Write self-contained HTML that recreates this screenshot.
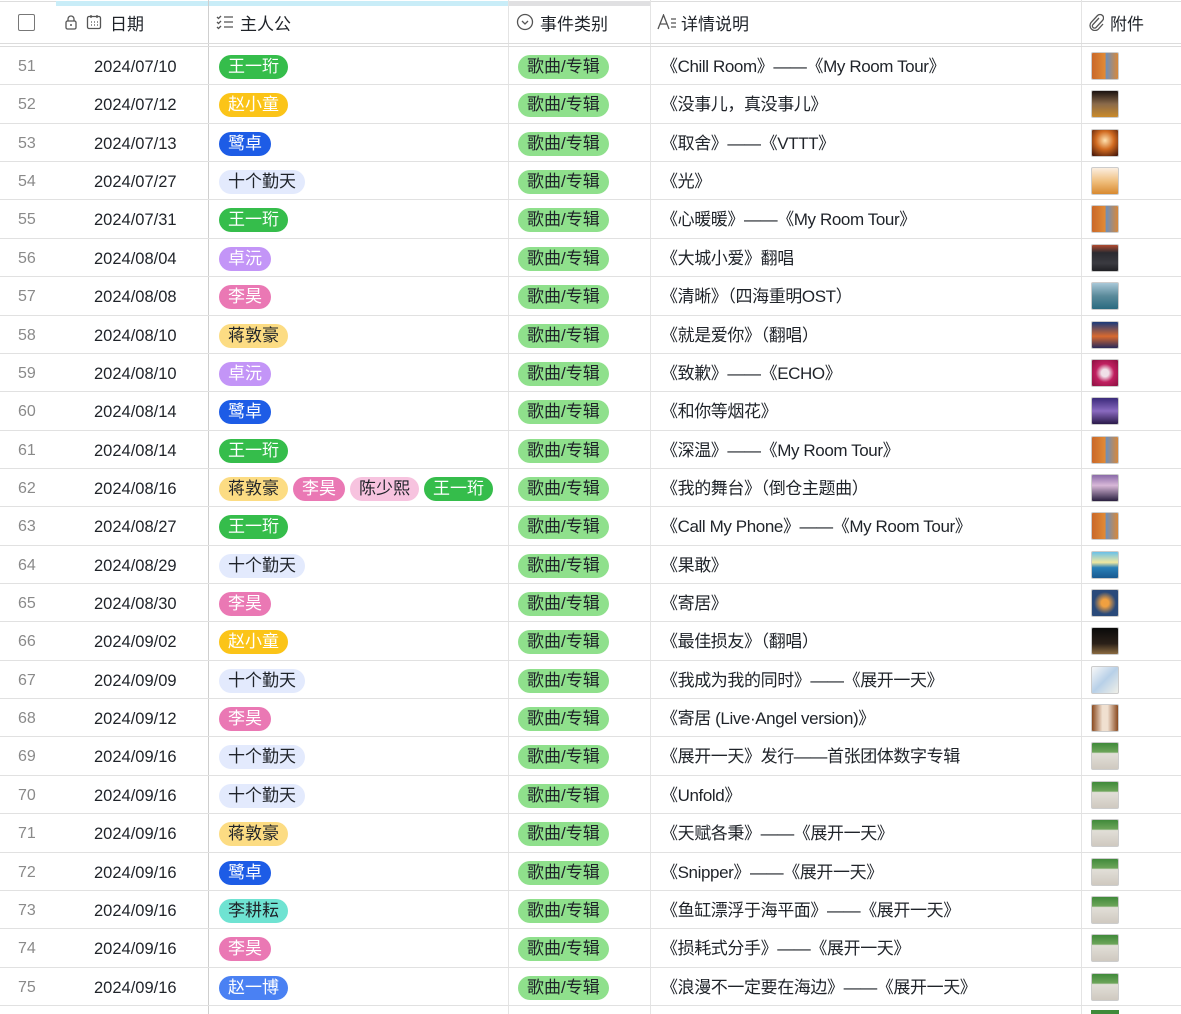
<!DOCTYPE html>
<html><head><meta charset="utf-8"><style>
*{box-sizing:border-box;margin:0;padding:0}
html,body{width:1181px;height:1014px;overflow:hidden}
body{background:#fff;font-family:"Liberation Sans","Noto Sans CJK SC",sans-serif;color:#1f2329;position:relative}
.topl{position:absolute;left:0;top:1px;width:1181px;height:1px;background:#ddd}
.bb{position:absolute;left:56px;top:1px;width:452px;height:5px;background:#c9edf8}
.gb{position:absolute;left:508px;top:1px;width:142px;height:5px;background:#e0e0e2}
.hd{position:absolute;top:0;height:44px;display:flex;align-items:center;font-size:17px;color:#1f2329}
.hl1{position:absolute;left:0;top:43px;width:1181px;height:1px;background:#dcdcdc}
.hl2{position:absolute;left:0;top:46px;width:1181px;height:1px;background:#dcdcdc}
.v{position:absolute;top:0;bottom:0;width:1px;background:#e4e4e4}
.row{position:absolute;left:0;width:1181px;height:38.36px;border-bottom:1px solid #e1e1e1}
.n{position:absolute;left:18px;top:1px;line-height:38px;font-size:16px;color:#8a8a8a}
.d{position:absolute;left:94px;top:1px;line-height:38px;font-size:16.5px;color:#1f2329}
.tags{position:absolute;left:219px;top:8px;display:flex;gap:5px}
.t{height:24px;line-height:24px;border-radius:12px;padding:0 9px;font-size:17px;white-space:nowrap}
.g{background:#35bd4b;color:#fff}.y{background:#fbc418;color:#fff}.b{background:#1d5ce6;color:#fff}
.l{background:#e3eafd;color:#1f2329}.p{background:#c395f7;color:#fff}.k{background:#ea78b4;color:#fff}
.ly{background:#fcdc83;color:#1f2329}.lp{background:#f7c3df;color:#1f2329}.tl{background:#6fe3d2;color:#1f2329}.mb{background:#4a81f3;color:#fff}
.c{position:absolute;left:518px;top:8px;height:24px;line-height:24px;border-radius:12px;padding:0 9px;font-size:17px;background:#8fe08c;color:#1f2329}
.x{position:absolute;left:661px;top:1px;line-height:38px;font-size:17px;letter-spacing:-0.4px;color:#1f2329;white-space:nowrap}
.im{position:absolute;left:1091px;top:5px;width:28px;height:28px;border-radius:2px;border:1px solid #ccc}
.rm{background:linear-gradient(90deg,#c9682a 0,#e08a36 50%,#6f8fb8 55%,#d8883a 100%)}
.gr{background:linear-gradient(#3f8a3a 0,#6da55a 35%,#e2dfd8 40%,#cfc9c0 100%)}
</style></head><body>
<div class="topl"></div><div class="bb"></div><div class="gb"></div>
<div class="v" style="left:208px;background:#cfcfcf"></div>
<div class="v" style="left:508px"></div>
<div class="v" style="left:650px"></div>
<div class="v" style="left:1081px"></div>
<div class="hd" style="left:18px"><span style="display:inline-block;width:17px;height:17px;border:1.5px solid #777;border-radius:2px"></span></div>
<div class="hd" style="left:64px;gap:8px">
<svg width="14" height="16" viewBox="0 0 14 16"><rect x="2" y="7" width="10" height="8" rx="1.5" fill="none" stroke="#555" stroke-width="1.3"/><path d="M4 7V5a3 3 0 0 1 6 0v2" fill="none" stroke="#555" stroke-width="1.3"/><circle cx="7" cy="11" r="1" fill="#555"/></svg>
<svg width="16" height="16" viewBox="0 0 16 16"><rect x="1.5" y="2.5" width="13" height="12" rx="1.5" fill="none" stroke="#555" stroke-width="1.3"/><path d="M5 1v3M11 1v3" stroke="#555" stroke-width="1.3"/><path d="M5 8h1M8 8h1M11 8h1M5 11h1M8 11h1M11 11h1" stroke="#555" stroke-width="1.3"/></svg>
<span>日期</span></div>
<div class="hd" style="left:216px;gap:6px"><svg width="18" height="16" viewBox="0 0 18 16"><path d="M1 3l1.5 1.5L5 2M1 8l1.5 1.5L5 7M1 13l1.5 1.5L5 12M8 3h9M8 8h9M8 13h9" fill="none" stroke="#555" stroke-width="1.3"/></svg><span>主人公</span></div>
<div class="hd" style="left:516px;gap:6px"><svg width="18" height="18" viewBox="0 0 18 18"><circle cx="9" cy="9" r="7.5" fill="none" stroke="#555" stroke-width="1.3"/><path d="M6 8l3 3 3-3" fill="none" stroke="#555" stroke-width="1.3"/></svg><span>事件类别</span></div>
<div class="hd" style="left:657px;gap:4px"><svg width="20" height="16" viewBox="0 0 20 16"><path d="M1 15L6.5 1 12 15M3 10h7" fill="none" stroke="#555" stroke-width="1.3"/><path d="M14 5h5M14 9h5M14 13h5" stroke="#555" stroke-width="1.3"/></svg><span>详情说明</span></div>
<div class="hd" style="left:1088px;gap:6px"><svg width="16" height="18" viewBox="0 0 16 18"><path d="M11 5l-6 6.5a2 2 0 0 0 3 3l6.5-7a3.5 3.5 0 0 0-5-5L3 9.5a5 5 0 0 0 7 7l5-5.5" fill="none" stroke="#555" stroke-width="1.3"/></svg><span>附件</span></div>
<div class="hl1"></div><div class="hl2"></div>

<div class="row" style="top:47px"><span class="n">51</span><span class="d">2024/07/10</span><div class="tags"><span class="t g">王一珩</span></div><span class="c">歌曲/专辑</span><span class="x">《Chill Room》——《My Room Tour》</span><div class="im rm"></div></div>
<div class="row" style="top:85.36px"><span class="n">52</span><span class="d">2024/07/12</span><div class="tags"><span class="t y">赵小童</span></div><span class="c">歌曲/专辑</span><span class="x">《没事儿，真没事儿》</span><div class="im" style="background:linear-gradient(#1a1210,#8a6a4a 50%,#c98a2a)"></div></div>
<div class="row" style="top:123.72px"><span class="n">53</span><span class="d">2024/07/13</span><div class="tags"><span class="t b">鹭卓</span></div><span class="c">歌曲/专辑</span><span class="x">《取舍》——《VTTT》</span><div class="im" style="background:radial-gradient(circle at 50% 40%,#ffe2b0,#d06a20 45%,#3a1008)"></div></div>
<div class="row" style="top:162.08px"><span class="n">54</span><span class="d">2024/07/27</span><div class="tags"><span class="t l">十个勤天</span></div><span class="c">歌曲/专辑</span><span class="x">《光》</span><div class="im" style="background:linear-gradient(#fbeee0,#f0c080 50%,#d88a30)"></div></div>
<div class="row" style="top:200.44px"><span class="n">55</span><span class="d">2024/07/31</span><div class="tags"><span class="t g">王一珩</span></div><span class="c">歌曲/专辑</span><span class="x">《心暖暖》——《My Room Tour》</span><div class="im rm"></div></div>
<div class="row" style="top:238.8px"><span class="n">56</span><span class="d">2024/08/04</span><div class="tags"><span class="t p">卓沅</span></div><span class="c">歌曲/专辑</span><span class="x">《大城小爱》翻唱</span><div class="im" style="background:linear-gradient(#b04a30,#2a2a30 30%,#3a3a40 70%,#202024)"></div></div>
<div class="row" style="top:277.16px"><span class="n">57</span><span class="d">2024/08/08</span><div class="tags"><span class="t k">李昊</span></div><span class="c">歌曲/专辑</span><span class="x">《清晰》（四海重明OST）</span><div class="im" style="background:linear-gradient(#a8c8d8,#5a8a9a 50%,#2a6a80)"></div></div>
<div class="row" style="top:315.52px"><span class="n">58</span><span class="d">2024/08/10</span><div class="tags"><span class="t ly">蒋敦豪</span></div><span class="c">歌曲/专辑</span><span class="x">《就是爱你》（翻唱）</span><div class="im" style="background:linear-gradient(#1a3a7a,#d86a30 55%,#2a2a5a)"></div></div>
<div class="row" style="top:353.88px"><span class="n">59</span><span class="d">2024/08/10</span><div class="tags"><span class="t p">卓沅</span></div><span class="c">歌曲/专辑</span><span class="x">《致歉》——《ECHO》</span><div class="im" style="background:radial-gradient(#f0e0e8 20%,#c02060 50%,#8a1040)"></div></div>
<div class="row" style="top:392.24px"><span class="n">60</span><span class="d">2024/08/14</span><div class="tags"><span class="t b">鹭卓</span></div><span class="c">歌曲/专辑</span><span class="x">《和你等烟花》</span><div class="im" style="background:linear-gradient(#3a2a7a,#8a6ac0 50%,#2a1a4a)"></div></div>
<div class="row" style="top:430.6px"><span class="n">61</span><span class="d">2024/08/14</span><div class="tags"><span class="t g">王一珩</span></div><span class="c">歌曲/专辑</span><span class="x">《深温》——《My Room Tour》</span><div class="im rm"></div></div>
<div class="row" style="top:468.96px"><span class="n">62</span><span class="d">2024/08/16</span><div class="tags"><span class="t ly">蒋敦豪</span><span class="t k">李昊</span><span class="t lp">陈少熙</span><span class="t g">王一珩</span></div><span class="c">歌曲/专辑</span><span class="x">《我的舞台》（倒仓主题曲）</span><div class="im" style="background:linear-gradient(#8a6aa8,#d8b8d8 40%,#2a2040)"></div></div>
<div class="row" style="top:507.32px"><span class="n">63</span><span class="d">2024/08/27</span><div class="tags"><span class="t g">王一珩</span></div><span class="c">歌曲/专辑</span><span class="x">《Call My Phone》——《My Room Tour》</span><div class="im rm"></div></div>
<div class="row" style="top:545.68px"><span class="n">64</span><span class="d">2024/08/29</span><div class="tags"><span class="t l">十个勤天</span></div><span class="c">歌曲/专辑</span><span class="x">《果敢》</span><div class="im" style="background:linear-gradient(#6ac0e8,#f0e8a0 40%,#2a80b8 60%,#1a5a90)"></div></div>
<div class="row" style="top:584.04px"><span class="n">65</span><span class="d">2024/08/30</span><div class="tags"><span class="t k">李昊</span></div><span class="c">歌曲/专辑</span><span class="x">《寄居》</span><div class="im" style="background:radial-gradient(#f0a040 20%,#2a4a7a 60%)"></div></div>
<div class="row" style="top:622.4px"><span class="n">66</span><span class="d">2024/09/02</span><div class="tags"><span class="t y">赵小童</span></div><span class="c">歌曲/专辑</span><span class="x">《最佳损友》（翻唱）</span><div class="im" style="background:linear-gradient(#0a0a0a,#2a2018 60%,#8a6a40)"></div></div>
<div class="row" style="top:660.76px"><span class="n">67</span><span class="d">2024/09/09</span><div class="tags"><span class="t l">十个勤天</span></div><span class="c">歌曲/专辑</span><span class="x">《我成为我的同时》——《展开一天》</span><div class="im" style="background:linear-gradient(135deg,#f8f8f8,#b8d0e8 50%,#f0f0e8)"></div></div>
<div class="row" style="top:699.12px"><span class="n">68</span><span class="d">2024/09/12</span><div class="tags"><span class="t k">李昊</span></div><span class="c">歌曲/专辑</span><span class="x">《寄居 (Live·Angel version)》</span><div class="im" style="background:linear-gradient(90deg,#8a4a20,#f0e0d0 40%,#f0e0d0 60%,#8a4a20)"></div></div>
<div class="row" style="top:737.48px"><span class="n">69</span><span class="d">2024/09/16</span><div class="tags"><span class="t l">十个勤天</span></div><span class="c">歌曲/专辑</span><span class="x">《展开一天》发行——首张团体数字专辑</span><div class="im gr"></div></div>
<div class="row" style="top:775.84px"><span class="n">70</span><span class="d">2024/09/16</span><div class="tags"><span class="t l">十个勤天</span></div><span class="c">歌曲/专辑</span><span class="x">《Unfold》</span><div class="im gr"></div></div>
<div class="row" style="top:814.2px"><span class="n">71</span><span class="d">2024/09/16</span><div class="tags"><span class="t ly">蒋敦豪</span></div><span class="c">歌曲/专辑</span><span class="x">《天赋各秉》——《展开一天》</span><div class="im gr"></div></div>
<div class="row" style="top:852.56px"><span class="n">72</span><span class="d">2024/09/16</span><div class="tags"><span class="t b">鹭卓</span></div><span class="c">歌曲/专辑</span><span class="x">《Snipper》——《展开一天》</span><div class="im gr"></div></div>
<div class="row" style="top:890.92px"><span class="n">73</span><span class="d">2024/09/16</span><div class="tags"><span class="t tl">李耕耘</span></div><span class="c">歌曲/专辑</span><span class="x">《鱼缸漂浮于海平面》——《展开一天》</span><div class="im gr"></div></div>
<div class="row" style="top:929.28px"><span class="n">74</span><span class="d">2024/09/16</span><div class="tags"><span class="t k">李昊</span></div><span class="c">歌曲/专辑</span><span class="x">《损耗式分手》——《展开一天》</span><div class="im gr"></div></div>
<div class="row" style="top:967.64px"><span class="n">75</span><span class="d">2024/09/16</span><div class="tags"><span class="t mb">赵一博</span></div><span class="c">歌曲/专辑</span><span class="x">《浪漫不一定要在海边》——《展开一天》</span><div class="im gr"></div></div>
<div style="position:absolute;left:1091px;top:1010px;width:28px;height:4px;background:#3f8a3a"></div>
</body></html>
